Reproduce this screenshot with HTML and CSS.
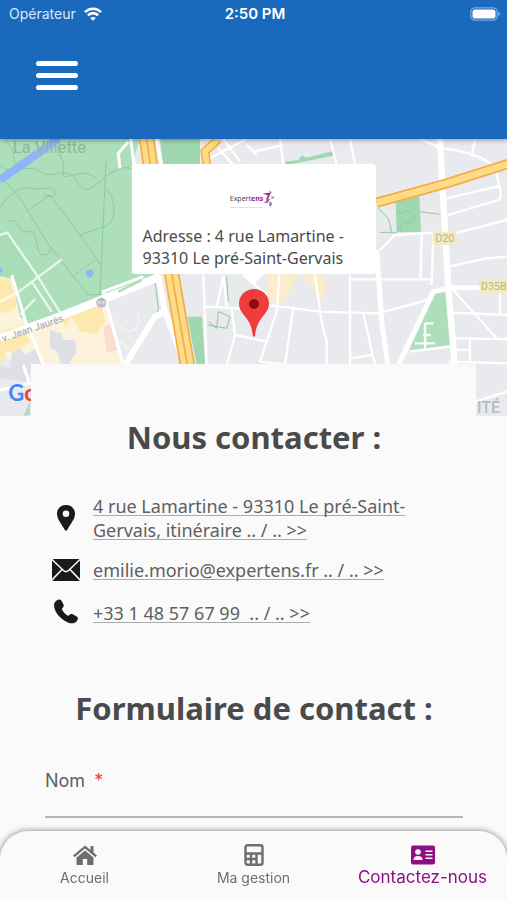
FILE: index.html
```html
<!DOCTYPE html>
<html lang="fr">
<head>
    <meta charset="UTF-8">
    <meta name="viewport" content="width=device-width, initial-scale=1.0">
    <title>Contactez-nous</title>
    <link rel="stylesheet" href="styles.css">
</head>
<body>
    <header class="header">
        <div class="status-bar">
            <div class="status-left">
                <span>Opérateur</span>
                <svg class="wifi" viewBox="0 0 18 14" fill="none" stroke="#fff" stroke-width="2.6">
                    <path d="M1 5.2C5.5 .6 12.500 .6 17 5.200"/>
                    <path d="M3.900 8.300C6.800 5.400 11.200 5.400 14.100 8.300"/>
                    <path d="M9 13.800 6.200 11C7.800 9.500 10.200 9.500 11.800 11Z" fill="#fff" stroke="none"/>
                </svg>
            </div>
            <span class="status-time">2:50 PM</span>
            <div class="status-right">
                <svg class="battery" viewBox="0 0 31 14">
                    <rect x=".8" y=".8" width="26.400" height="12.400" rx="4" fill="none" stroke="#fff" stroke-opacity=".45" stroke-width="1.200"/>
                    <rect x="2.500" y="2.500" width="23" height="9" rx="2.500" fill="#fff"/>
                    <path d="M28.500 4.800C30.600 5.600 30.600 8.400 28.500 9.200Z" fill="#fff" fill-opacity=".5"/>
                </svg>
            </div>
        </div>
        <button class="menu-button" aria-label="Menu">
            <span></span>
            <span></span>
            <span></span>
        </button>
    </header>

    <section class="map">
        <svg class="map-canvas" viewBox="0 12 1521 831" preserveAspectRatio="xMidYMid slice">
            <rect y="12" width="1521" height="831" fill="#e8eaed"/>

            <!-- built-up areas -->
            <path d="M0 425 35 425 75 570 300 490 320 500 370 690 180 700 40 690 0 640Z" fill="#fdf3dc"/>
            <path d="M0 430 28 430 50 500 45 520 20 535 0 530ZM0 590 60 570 90 620 50 650 20 650 0 690ZM185 535 300 495 315 560 290 600 240 590 215 545 195 580Z" fill="#fde9ae"/>
            <path d="M35 655 60 640 75 660 110 640 130 690 100 690 80 740 0 730 0 690 30 700ZM150 585 185 595 190 615 225 615 230 650 205 690 180 685 175 655 150 635Z" fill="#dfe0e5"/>
            <path d="M310 575 330 565 352 645 320 655Z" fill="#fbdcd2"/>
            <path d="M800 418 895 418 860 490 845 505 805 500ZM910 418 960 418 980 435 975 490 950 495 935 450 910 430Z" fill="#fbeccb"/>

            <!-- parks -->
            <path d="M0 12H420L395 90V415L470 418 310 478 175 538 85 565 60 545 35 430 0 425Z" fill="#aedfbb"/>
            <path d="M0 300 22 292 110 420 60 440 0 420Z" fill="#a7dcb6"/>
            <path d="M480 12H600V100H490ZM562 545H606L615 690H590Z" fill="#9fd8b0"/>
            <path d="M855 80 895 75 905 62 920 68 998 48 1000 62 860 90Z" fill="#9fd8b0"/>
            <path d="M1187 200 1258 184 1263 290 1190 292Z" fill="#9fd8b0"/>
            <path d="M1305 475 1340 472 1350 630 1228 646Z" fill="#aedfbb"/>
            <path d="M90 800V840L70 842Z" fill="#aedfbb"/>

            <!-- park paths -->
            <g fill="none" stroke="#8fc7a1" stroke-width="3">
                <path d="M0 120 60 190 150 335 265 480 305 478"/>
                <path d="M150 180 240 300 305 395M85 225 150 180M318 80 300 475M218 425 285 375M240 300 325 270C355 240 340 180 318 160"/>
                <path d="M0 90C40 130 80 80 120 110S200 80 235 145 320 80 395 100"/>
                <path d="M0 215C30 180 60 150 100 160S155 140 165 180C150 200 130 160 135 185"/>
                <path d="M20 260C60 240 50 300 85 290S100 360 130 360 145 330 155 340"/>
                <path d="M20 20C60 60 20 90 75 95M180 12C160 60 200 70 190 110S250 90 290 130"/>
                <path d="M465 440 475 520 465 560M625 570 680 580 690 545 655 530 650 580 625 560M680 425 685 500"/>
                <path d="M1135 220 1165 250 1175 290M1190 230C1220 240 1220 210 1240 240S1200 250 1200 285M1258 230 1320 238M1140 292H1190"/>
            </g>

            <!-- water -->
            <path d="M0 135 175 12" fill="none" stroke="#8fb4f7" stroke-width="24"/>
            <path d="M258 408 275 403 283 415 270 430 258 420ZM0 397 8 403 4 415 0 415Z" fill="#8fb4f7"/>

            <!-- streets -->
            <g fill="none" stroke="#fff" stroke-width="7">
                <path d="M0 300 22 293 110 420 185 540M0 500 50 475 185 373M95 440 155 530M60 540 105 492" stroke-opacity=".75"/>
                <path d="M85 575 130 690M35 420 80 570M310 470 370 690M320 490 310 470 430 425M0 765 90 745M70 690 90 750" stroke-width="9"/>
                <path d="M360 100 355 55 385 20M392 12 402 90M470 12 485 90" stroke-width="9"/>
                <path d="M630 70 740 12M670 12 720 80M655 40 700 90M740 30 770 60"/>
                <path d="M610 420 620 690M615 515 762 522M650 515 670 425 680 515M695 520 705 600 680 690M705 600 800 620M730 420 800 480"/>
                <path d="M840 12 850 90M762 50 850 30M990 12 1010 90M1050 12 1065 90"/>
                <path d="M838 420 830 530 780 680M880 515 855 690M760 505 960 530 1135 535 1300 490M945 420 965 560 980 620V690M1050 420V690M1090 535 1125 690M1050 670 1115 660"/>
                <path d="M1050 433H1295M1265 295 1262 430M1140 345 1185 300 1300 293 1295 450M780 680 860 690"/>
                <path d="M1260 12 1325 40C1400 45 1470 75 1485 100L1500 160M1415 65 1425 12M1340 190 1490 155C1505 155 1505 190 1495 195L1345 240M1345 300 1521 255M1345 395 1460 370 1521 365"/>
                <path d="M1355 460 1490 610M1360 533 1521 540M1500 460V540M1365 610 1521 612M1410 610V680M1365 645H1410M1345 680 1521 685M1230 650 1350 635M1275 565H1300M1270 600H1292M1245 625H1305M1275 565V640"/>
                <path d="M1425 800 1521 770"/>
            </g>
            <g fill="none" stroke="#fff">
                <path d="M0 610 190 540 480 425" stroke-width="24"/>
                <path d="M475 420 495 530 555 690M375 690 465 545 495 530" stroke-width="18"/>
                <path d="M1130 345 1145 560 1165 700M1190 700 1300 470 1350 458H1521" stroke-width="15"/>
                <path d="M1320 12 1330 200 1345 460 1365 700" stroke-width="19"/>
            </g>
            <path d="M355 470 425 435" stroke="#aedfbb" stroke-width="8"/>
            <path d="M345 560C390 610 420 590 415 540M350 610 385 640" fill="none" stroke="#f6f7f8" stroke-width="4"/>

            <!-- main roads -->
            <g fill="none">
                <path d="M440 12 452 100 515 415 562 690" stroke="#f3ae3b" stroke-width="46"/>
                <path d="M440 12 452 100 515 415 562 690" stroke="#fddb8a" stroke-width="36"/>
                <path d="M440 12 452 100 515 415 562 690" stroke="#f3ae3b" stroke-width="5"/>
                <path d="M655 12 615 50 622 100" stroke="#f3ae3b" stroke-width="26"/>
                <path d="M655 12 615 50 622 100" stroke="#fddb8a" stroke-width="17"/>
                <path d="M1130 203 1330 148 1530 85" stroke="#f3ae3b" stroke-width="30"/>
                <path d="M1130 203 1330 148 1530 85" stroke="#fddb8a" stroke-width="20"/>
            </g>

            <!-- labels -->
            <circle cx="304" cy="503" r="15" fill="#b9bdc9"/>
            <path d="M296 508V498L304 505 312 498V508" fill="none" stroke="#eef0f4" stroke-width="3"/>
            <rect x="1298" y="290" width="72" height="40" rx="4" fill="#f3ebc0"/>
            <rect x="1438" y="433" width="100" height="42" rx="4" fill="#f3ebc0"/>
            <text x="1306" y="321" class="road-label">D20</text>
            <text x="1443" y="465" class="road-label">D35B</text>
            <text x="38" y="54" class="area-label">La Villette</text>
            <text x="1431" y="835" class="city-label">ITÉ</text>
            <text x="10" y="621" class="street-label" transform="rotate(-19 10 621)">v. Jean Jaurès</text>
            <text x="25" y="797" class="map-brand"><tspan fill="#4285f4">G</tspan><tspan fill="#ea4335">o</tspan></text>
        </svg>

        <div class="marker">
            <div class="marker-popup">
                <div class="brand">
                    <div class="brand-name">Expert<b>ens</b></div>
                    <svg class="brand-mark" viewBox="0 0 14 20">
                        <path d="M0 3.500 8 2.500 4.500 10 3 9 5 5.500Z" fill="#92278f"/>
                        <path d="M4 9 7 9 4.500 13 0 12.500 3 11.500Z" fill="#b04aa8"/>
                        <path d="M6 .5 9 2 7.500 3.500ZM8.500 6 12 7.500 8.500 9ZM7 11 9.500 14 7 17 6 14Z" fill="#8c8c8c"/>
                    </svg>
                    <div class="brand-line"></div>
                </div>
                <p>Adresse : 4 rue Lamartine - 93310 Le pré-Saint-Gervais</p>
            </div>
            <svg class="marker-pin" viewBox="0 0 30 48">
                <path d="M15 0C6.500 0 0 6.500 0 14.500C0 26 12.500 28 13.800 46.500C14 48 16 48 16.200 46.500C17.500 28 30 26 30 14.500C30 6.500 23.500 0 15 0Z" fill="#ee3d3b"/>
                <circle cx="15" cy="15" r="5" fill="#8b0d0d"/>
            </svg>
        </div>
    </section>

    <main class="content">
        <h1>Nous contacter :</h1>
        <ul class="contact-list">
            <li>
                <svg class="contact-icon" viewBox="0 0 28 28">
                    <path d="M14 1C8.600 1 5 4.800 5 9.800C5 15.500 10 20.500 12.500 25.500Q14 28 15.500 25.500C18 20.500 23 15.500 23 9.800C23 4.800 19.400 1 14 1ZM14 6.500A3.300 3.300 0 1 1 14 13.100A3.300 3.300 0 1 1 14 6.500Z" fill="#1a1a1a" fill-rule="evenodd"/>
                </svg>
                <a href="#itineraire">4 rue Lamartine - 93310 Le pré-Saint-Gervais, itinéraire .. / .. &gt;&gt;</a>
            </li>
            <li>
                <svg class="contact-icon" viewBox="0 0 28 28">
                    <rect x="0" y="3" width="28" height="22" rx="1.500" fill="#1a1a1a"/>
                    <path d="M0 3.500 11.500 14.500Q14 16.800 16.500 14.500L28 3.500M0 24 10 13.500M28 24 18 13.500" fill="none" stroke="#fafafa" stroke-width="1.600"/>
                </svg>
                <a href="mailto:emilie.morio@expertens.fr">emilie.morio@expertens.fr .. / .. &gt;&gt;</a>
            </li>
            <li>
                <svg class="contact-icon" viewBox="0 0 28 28">
                    <path d="M3.500 2.500C5.500 .2 8.300 -.2 9.500 1.800L11.500 5.500C12.200 7 11.400 8.400 9.800 9.800C10.500 12.300 13.300 15.700 16.300 16.900C18 15 19.300 14.600 20.800 15.300L24.700 17.500C26.500 18.700 26.200 21 24.200 22.700C21 25.300 16.500 24.600 11.800 21.200C5.600 16.700 2.200 11.500 2.100 6.500C2 4.800 2.600 3.400 3.500 2.500Z" fill="#1a1a1a"/>
                </svg>
                <a href="tel:+33148576799">+33 1 48 57 67 99 &nbsp;.. / .. &gt;&gt;</a>
            </li>
        </ul>

        <h2>Formulaire de contact :</h2>
        <form class="contact-form">
            <label for="nom">Nom <span class="required">*</span></label>
            <input type="text" id="nom" name="nom" required>
        </form>
    </main>

    <nav class="tab-bar">
        <a href="#accueil" class="tab">
            <svg class="tab-icon" viewBox="0 0 26 22" fill="currentColor">
                <path d="M13 1.500 1 11.500 2.500 13.300 13 4.600 23.500 13.300 25 11.500 21.500 8.500V2H18.500V6Z"/>
                <path d="M13 6.500 4.500 13.500V20Q4.500 21 5.500 21H10.800V15H15.200V21H20.500Q21.500 21 21.500 20V13.500Z"/>
            </svg>
            <span>Accueil</span>
        </a>
        <a href="#gestion" class="tab">
            <svg class="tab-icon" viewBox="0 0 26 22" fill="none" stroke="currentColor" stroke-width="2.4">
                <rect x="4.500" y="1.200" width="17" height="19.600" rx="2"/>
                <path d="M4.500 9.500H21.500M4.500 15H15.500M10 9.500V21M15.500 9.500V21"/>
            </svg>
            <span>Ma gestion</span>
        </a>
        <a href="#contact" class="tab active">
            <svg class="tab-icon" viewBox="0 0 26 22">
                <rect x="1" y="1.500" width="24" height="19" rx="2" fill="currentColor"/>
                <g fill="#fafafa">
                    <circle cx="8" cy="8" r="2.800"/>
                    <path d="M3.500 16C3.500 13 5 12 8 12S12.500 13 12.500 16Z"/>
                    <path d="M15.500 6.500H22.500V8H15.500ZM15.500 10H22.500V11.500H15.500ZM15.500 13.500H22.500V15H15.500Z"/>
                </g>
            </svg>
            <span>Contactez-nous</span>
        </a>
    </nav>
</body>
</html>
```
FILE: styles.css
```css
* {
    box-sizing: border-box;
}
body {
    font-family: "Noto Sans", "Open Sans", sans-serif;
    background-color: #fafafa;
    color: #4a4a4a;
    margin: 0;
    overflow-x: hidden;
}
.header {
    position: relative;
    z-index: 2;
    height: 139px;
    background-color: #1b69bc;
    box-shadow: 0 1px 5px rgba(0, 0, 0, 0.4);
}
.status-bar {
    display: grid;
    grid-template-columns: 1fr auto 1fr;
    align-items: center;
    height: 27px;
    padding: 0 6px 0 9px;
    color: white;
    font-family: Inter, sans-serif;
    font-size: 14px;
}
.status-left {
    display: flex;
    align-items: center;
    gap: 8px;
    color: #dce9f7;
}
.status-time {
    font-size: 15px;
    font-weight: 600;
}
.status-right {
    display: flex;
    justify-content: flex-end;
}
.wifi {
    width: 18px;
    height: 14px;
}
.battery {
    width: 31px;
    height: 14px;
}
.menu-button {
    display: flex;
    flex-direction: column;
    gap: 7px;
    width: 42px;
    margin: 34px 0 0 36px;
    padding: 0;
    background: none;
    border: none;
    cursor: pointer;
}
.menu-button span {
    width: 100%;
    height: 5px;
    border-radius: 3px;
    background-color: white;
}

/* Map */
.map {
    position: relative;
    height: 277px;
}
.map-canvas {
    display: block;
    width: 100%;
    height: 100%;
}
.area-label,
.city-label,
.road-label,
.street-label {
    font-family: Roboto, sans-serif;
}
.area-label {
    font-size: 50px;
    fill: #8db99b;
}
.city-label {
    font-size: 48px;
    font-weight: 500;
    fill: #b9bbbf;
}
.road-label {
    font-size: 32px;
    fill: #b8b194;
}
.street-label {
    font-size: 30px;
    font-weight: 500;
    fill: #b0b0b0;
}
.map-brand {
    font-family: Lato, sans-serif;
    font-size: 66px;
    font-weight: bold;
}
.marker {
    position: absolute;
    left: 50%;
    bottom: 79px;
    transform: translateX(-50%);
    display: flex;
    flex-direction: column;
    align-items: center;
    gap: 15px;
}
.marker-popup {
    position: relative;
    width: 244px;
    padding: 21px 11px 5px;
    border-radius: 4px;
    background-color: white;
}
.marker-popup::after {
    content: "";
    position: absolute;
    top: 100%;
    left: 50%;
    margin-left: -10px;
    border: 10px solid transparent;
    border-top-color: white;
    border-bottom: none;
}
.marker-popup p {
    margin: 0;
    font-size: 16px;
    line-height: 22px;
}
.marker-pin {
    width: 30px;
    height: 48px;
}
.brand {
    display: grid;
    grid-template-columns: auto 14px;
    align-content: center;
    justify-content: center;
    height: 40px;
    padding-bottom: 10px;
}
.brand-name {
    padding-top: 4px;
    font-size: 7px;
    line-height: 10px;
}
.brand-name b {
    color: #92278f;
}
.brand-mark {
    grid-row: span 2;
    width: 14px;
    height: 20px;
}
.brand-line {
    height: 1px;
    background-color: #e6dde5;
}

/* Contact details and form */
.content {
    position: relative;
    margin: -52px 31px 0;
    padding: 52px 13px 90px 14px;
    background-color: #fafafa;
}
h1,
h2 {
    margin: 0;
    font-size: 31px;
    line-height: 42px;
    text-align: center;
}
.contact-list {
    display: flex;
    flex-direction: column;
    gap: 13px;
    margin: 36px 0 59px;
    padding: 0 30px 0 7px;
    list-style: none;
}
.contact-list li {
    display: flex;
    align-items: center;
    gap: 13px;
    min-height: 30px;
}
.contact-icon {
    flex-shrink: 0;
    width: 28px;
    height: 28px;
}
.contact-list a {
    color: #5f5f5f;
    font-size: 18px;
    line-height: 24px;
    text-decoration: underline 1px #ababab;
    text-underline-offset: 2px;
    text-decoration-skip-ink: none;
}
.contact-form {
    display: flex;
    flex-direction: column;
    margin-top: 40px;
    font-family: Inter, sans-serif;
    font-size: 18px;
}
.contact-form label {
    line-height: 24px;
    color: #5f5f5f;
}
.required {
    margin-left: 4px;
    color: #f44336;
}
.contact-form input {
    width: 100%;
    height: 25px;
    padding: 0;
    border: none;
    border-bottom: 2px solid #b5b5b5;
    border-radius: 0;
    background: none;
    font: inherit;
    outline: none;
}

/* Bottom tabs */
.tab-bar {
    position: fixed;
    left: 0;
    right: 0;
    bottom: 0;
    z-index: 3;
    display: grid;
    grid-template-columns: repeat(3, 1fr);
    height: 69px;
    padding-top: 13px;
    border-radius: 28px 28px 0 0;
    background-color: #fafafa;
    box-shadow: 0 0 6px rgba(0, 0, 0, 0.5);
    font-family: Inter, sans-serif;
    font-size: 14px;
}
.tab {
    display: flex;
    flex-direction: column;
    align-items: center;
    color: #6e6e6e;
    line-height: 24px;
    text-decoration: none;
}
.tab-icon {
    width: 26px;
    height: 22px;
}
.tab.active {
    color: #8e0f82;
    font-size: 17px;
    line-height: 22px;
}
```
